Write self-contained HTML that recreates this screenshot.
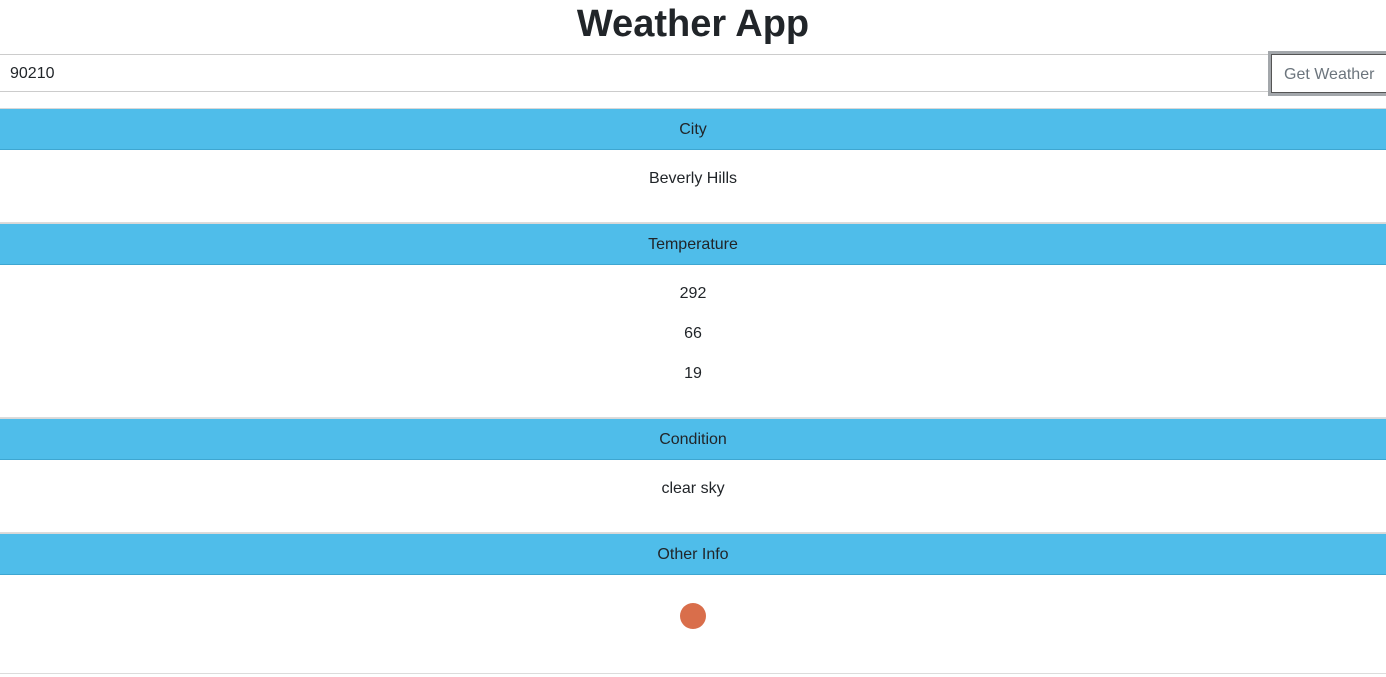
<!DOCTYPE html>
<html><head><meta charset="utf-8"><style>
*{margin:0;padding:0;box-sizing:border-box}
body{width:1386px;height:677px;background:#fff;font-family:"Liberation Sans",sans-serif;color:#212529;position:relative;overflow:hidden}
.a{position:absolute}
.t{left:0;width:1386px;text-align:center;font-size:16px;line-height:20px}
.h{left:0;width:1386px;background:#4fbdea;border-top:1px solid #d8d8d8;border-bottom:1px solid #3ea6d1;text-align:center;font-size:16px;line-height:41px}
.l{left:0;width:1386px;height:2px;background:#dcdcdc}
</style></head><body>
<div class="a" style="left:0;width:1386px;top:1px;text-align:center;font-size:38px;font-weight:bold;line-height:46px;color:#212529">Weather App</div>
<div class="a" style="left:0;top:54px;width:1386px;height:38px;border-top:1px solid #ccc;border-bottom:1px solid #ccc"></div>
<div class="a" style="left:10px;top:64px;font-size:16px;line-height:20px">90210</div>
<div class="a" style="left:1268px;top:51px;width:122px;height:45px;border:3px solid #a3a7ab;background:#fff"><div style="border:1px solid #555;height:39px;font-size:16px;color:#6c757d;line-height:39px;padding-left:12px">Get Weather</div></div>
<div class="a h" style="top:108px;height:42px">City</div>
<div class="a t" style="top:169px">Beverly Hills</div>
<div class="a l" style="top:222px"></div>
<div class="a h" style="top:223px;height:42px">Temperature</div>
<div class="a t" style="top:284px">292</div>
<div class="a t" style="top:324px">66</div>
<div class="a t" style="top:364px">19</div>
<div class="a l" style="top:417px"></div>
<div class="a h" style="top:418px;height:42px">Condition</div>
<div class="a t" style="top:479px">clear sky</div>
<div class="a l" style="top:532px"></div>
<div class="a h" style="top:533px;height:42px">Other Info</div>
<div class="a" style="left:680px;top:603px;width:26px;height:26px;border-radius:50%;background:#d96e4b"></div>
<div class="a" style="left:0;top:673px;width:1386px;height:1px;background:#dcdcdc"></div>
</body></html>
